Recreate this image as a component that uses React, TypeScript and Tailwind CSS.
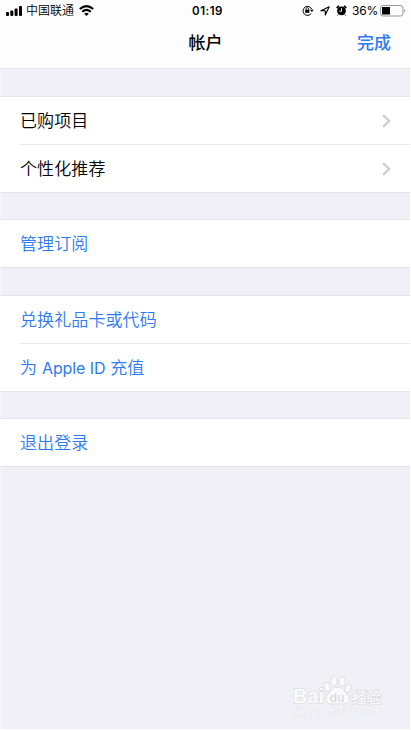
import { ReactNode } from "react";

const Chevron = () => (
  <svg className="h-[14px] w-[9px]" viewBox="0 0 9 14" fill="none" stroke="#c7c7cc" strokeWidth="1.8">
    <path d="M1 1l6.3 6L1 13" />
  </svg>
);

function Row({ children, blue, chevron, divider }: { children: ReactNode; blue?: boolean; chevron?: boolean; divider?: boolean }) {
  return (
    <div className="pl-5">
      <div className={`flex items-center justify-between pr-[19px] text-[17px] leading-6 tracking-[0.1px] ${blue ? "text-[#2d7af5]" : "text-black"} ${divider ? "h-12 border-b border-[#e9e9ec]" : "h-[47px]"}`}>
        <span className="font-[350] whitespace-nowrap">{children}</span>
        {chevron && <Chevron />}
      </div>
    </div>
  );
}

function Group({ children, className }: { children: ReactNode; className: string }) {
  return <section className={`shrink-0 border-y border-[#e5e5e9] bg-white ${className}`}>{children}</section>;
}

function StatusBar() {
  return (
    <div className="flex h-[21px] items-center justify-between pr-[4px] pl-[6px] text-[12px] leading-4">
      <div className="flex w-[150px] items-center">
        <svg className="h-[10px] w-[17px]" viewBox="0 0 17 10" fill="#000">
          <rect x="0" y="6" width="3" height="4" rx="1" />
          <rect x="4.3" y="4.5" width="3" height="5.5" rx="1" />
          <rect x="8.6" y="2.4" width="3" height="7.6" rx="1" />
          <rect x="13" y="0" width="3" height="10" rx="1" />
        </svg>
        <span className="ml-[3px] font-[350]">中国联通</span>
        <svg className="ml-[5px] h-[11px] w-[15px]" viewBox="0 0 15 11" fill="none" stroke="#000" strokeWidth="2">
          <path d="M.8 4.1q6.7-6 13.4 0M3.2 6.8q4.3-3.8 8.6 0" />
          <path d="M5.2 8.7q2.3-1.8 4.6 0L7.5 11z" fill="#000" stroke="none" />
        </svg>
      </div>
      <span className="pl-[3px] text-[11.5px] font-semibold tracking-[0.5px]">01:19</span>
      <div className="flex w-[150px] items-center justify-end">
        <svg className="h-[11px] w-[12px]" viewBox="0 0 12 11" fill="none" stroke="#000">
          <path d="M9.3 8.4A4.5 4.5 0 1 1 9.8 4.4" />
          <path d="M8 4.7h3.7L9.9 7z" fill="#000" stroke="none" />
          <rect x="3.2" y="4.7" width="4.2" height="3.1" fill="#000" stroke="none" />
          <path d="M4.1 5V3.8a1.2 1.2 0 0 1 2.4 0V5" strokeWidth=".8" />
        </svg>
        <svg className="ml-[6px] h-[10px] w-[10px]" viewBox="0 0 10 10" fill="none" stroke="#000" strokeWidth="1.1">
          <path d="M.9 4.7L9.2.8 5.3 9.1V4.7z" strokeLinejoin="round" />
        </svg>
        <svg className="ml-[6px] h-[11px] w-[11px]" viewBox="0 0 11 11" fill="none" stroke="#000">
          <circle cx="5.5" cy="5.9" r="4.4" fill="#000" stroke="none" />
          <path d="M.7 3L3 .9M10.3 3L8 .9" strokeWidth="1.7" />
          <path d="M2.2 9.5l-.8 1M8.8 9.5l.8 1" />
          <path d="M5.5 3.2v3H3.3" stroke="#fff" strokeWidth=".9" />
        </svg>
        <span className="ml-[5px] w-[26px] text-[12px] tracking-[-0.2px]">36%</span>
        <svg className="ml-[2px] h-[12px] w-[26px]" viewBox="0 0 26 12" fill="none">
          <rect x=".5" y=".5" width="22.5" height="10.5" rx="2.5" stroke="#999" />
          <rect x="2" y="2" width="8" height="7.5" fill="#000" />
          <path d="M24.3 4q2 1.8 0 3.6z" fill="#888" />
        </svg>
      </div>
    </div>
  );
}

function Watermark() {
  return (
    <div className="absolute top-[674px] left-[291px] h-[46px] w-[96px]">
      <svg className="h-full w-full" viewBox="0 0 96 46" fontFamily="'Liberation Sans','Noto Sans CJK SC',sans-serif">
        <g fill="#fafafc" stroke="#dedee4" strokeWidth="1">
          <ellipse cx="36" cy="13" rx="3" ry="4.5" transform="rotate(-15 36 13)" />
          <ellipse cx="43" cy="7" rx="3.2" ry="4.7" />
          <ellipse cx="51" cy="7.5" rx="3.2" ry="4.7" />
          <ellipse cx="57" cy="14.5" rx="3" ry="4.3" transform="rotate(20 57 14.5)" />
          <path d="M46 13c-5 0-6 4-9 7-4 4-3 10 3 10h13c6 0 7-6 3-10-3-3-5-7-10-7z" />
          <text x="2" y="29" fontSize="20" fontWeight="700" textLength="31" lengthAdjust="spacingAndGlyphs" strokeWidth="1.4" paintOrder="stroke">Bai</text>
          <text x="61" y="28.5" fontSize="15" fontWeight="500" textLength="29" lengthAdjust="spacingAndGlyphs" strokeWidth="1.6" paintOrder="stroke">经验</text>
        </g>
        <text x="38.5" y="27.5" fontSize="13" fontWeight="700" textLength="15" lengthAdjust="spacingAndGlyphs" fill="#dcdce3">du</text>
        <text x="3" y="41" fontSize="10" textLength="87" lengthAdjust="spacingAndGlyphs" fill="#fafafd" stroke="#e5e5ea" strokeWidth="1" paintOrder="stroke">jingyan.baidu.com</text>
      </svg>
    </div>
  );
}

export default function App() {
  return (
    <main className="relative flex h-[730px] w-[411px] flex-col overflow-hidden border-r border-b border-white bg-[#f0f0f6] bg-[linear-gradient(#fcfcfe,#fcfcfe)] bg-[length:1px_100%] bg-[position:1px_0] bg-no-repeat font-[Inter,'Noto_Sans_CJK_SC',sans-serif] text-black">
      <header className="h-[69px] shrink-0 border-b border-[#e5e5e9] bg-[#fdfdfd]">
        <StatusBar />
        <div className="grid h-[43px] grid-cols-3 items-center pr-[19px] pl-5 text-[17px] leading-6">
          <span />
          <h1 className="text-center font-medium">帐户</h1>
          <button className="text-right font-medium text-[#2d7af5]">完成</button>
        </div>
      </header>
      <Group className="mt-[27px]">
        <Row chevron divider>已购项目</Row>
        <Row chevron>个性化推荐</Row>
      </Group>
      <Group className="mt-[26px]">
        <Row blue>管理订阅</Row>
      </Group>
      <Group className="mt-[27px]">
        <Row blue divider>兑换礼品卡或代码</Row>
        <Row blue>为 <span className="text-[16px] font-normal tracking-[-0.1px]">Apple ID</span> 充值</Row>
      </Group>
      <Group className="mt-[26px]">
        <Row blue>退出登录</Row>
      </Group>
      <Watermark />
    </main>
  );
}
